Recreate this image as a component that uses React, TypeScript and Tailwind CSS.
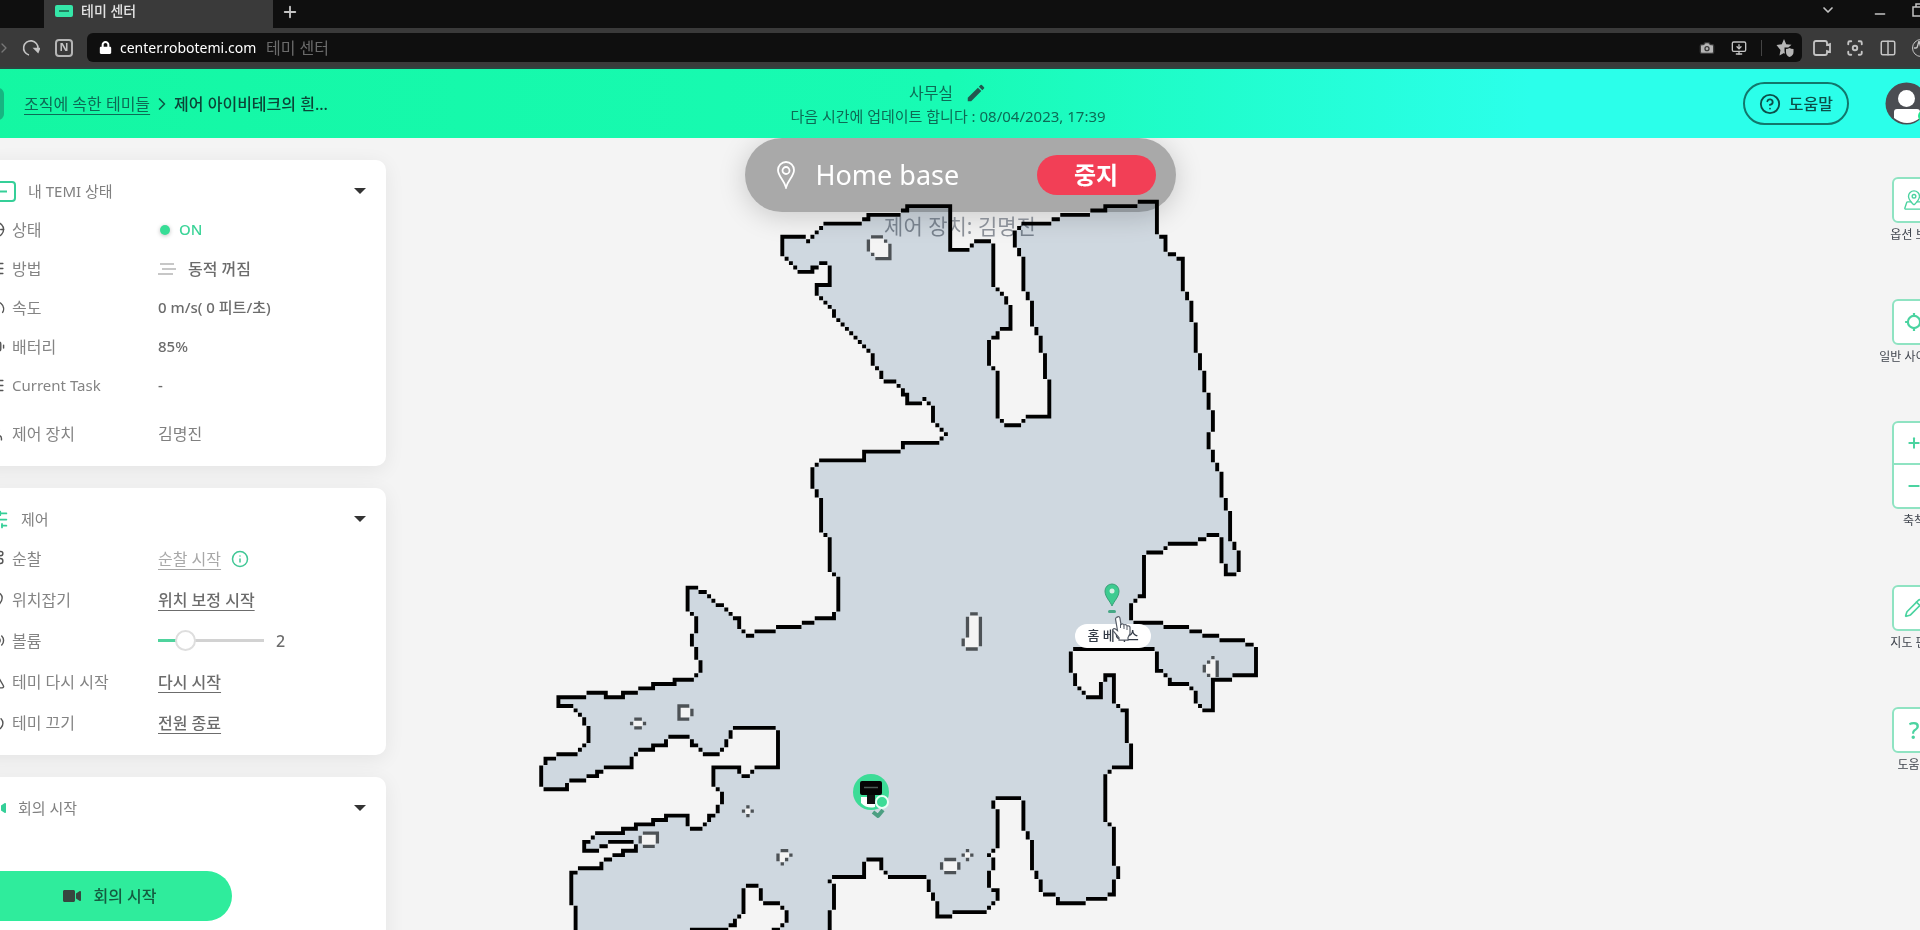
import React, { useMemo, useState } from "react";
import {
  Activity,
  Battery,
  Camera,
  ChevronDown,
  ChevronRight,
  CircleQuestionMark,
  Columns2,
  Crosshair,
  Focus,
  Gauge,
  Info,
  ListChecks,
  MapPin,
  MapPinned,
  Minus,
  MonitorDown,
  Pencil,
  Plus,
  Power,
  Route,
  SlidersHorizontal,
  TriangleAlert,
  User,
  Volume2,
} from "lucide-react";
import { FaLock, FaVideo } from "react-icons/fa";
import { MdEdit } from "react-icons/md";

const FONT = "font-['Noto_Sans','Noto_Sans_CJK_KR',sans-serif]";

// Size of one occupancy cell on the scanned floor map.
const CELL_W = 4.306;
const CELL_H = 4.385;
const ORIGIN_X = 782.3;
const ORIGIN_Y = 201.7;

const OUTER_WALL = `782,255 782,237 805,237 809,241 813,236 817,232 822,228 825,224 859,224 862,220 867,220 870,215
898,215 901,211 906,211 909,206 950,206 950,247 952,250 968,250 970,246 974,241 989,241 992,245 992,287 997,289
1001,293 1005,297 1005,303 1010,307 1010,329 1001,329 997,333 997,337 992,337 988,341 988,365 992,369 997,373
997,417 1001,421 1005,425 1020,425 1023,421 1027,416 1048,416 1050,412 1050,381 1046,378 1046,354 1041,351
1041,338 1037,334 1037,328 1032,325 1032,301 1028,298 1028,293 1023,290 1023,258 1019,255 1019,250 1015,246
1015,232 1019,228 1024,224 1050,224 1054,220 1059,220 1062,215 1090,215 1093,211 1104,211 1107,206 1135,206
1138,202 1155,202 1155,211 1159,215 1159,232 1164,236 1164,250 1168,254 1172,254 1177,258 1181,258 1181,290
1186,294 1186,298 1190,302 1190,320 1195,324 1195,351 1199,355 1199,368 1203,372 1203,391 1207,395 1207,408
1212,412 1212,430 1207,434 1207,448 1212,452 1212,460 1217,465 1217,469 1221,474 1221,495 1225,500 1225,509
1229,513 1229,540 1233,544 1233,549 1238,553 1238,571 1234,575 1225,575 1225,565 1221,561 1221,538 1217,535
1207,535 1203,539 1199,539 1195,544 1168,544 1164,548 1160,553 1150,553 1146,557 1142,561 1142,575 1146,579
1146,596 1141,596 1137,601 1133,605 1133,619 1137,622 1160,622 1164,627 1187,627 1190,631 1199,631 1203,636
1217,636 1221,640 1244,640 1248,644 1252,644 1256,648 1256,675 1233,675 1229,679 1212,679 1212,710 1203,710
1199,706 1195,702 1195,692 1190,689 1187,684 1168,684 1168,680 1164,675 1159,671 1155,668 1155,652 1152,648
1077,648 1072,652 1072,671 1076,674 1076,685 1081,689 1085,693 1089,697 1099,697 1103,693 1103,683 1107,680
1107,675 1115,675 1115,702 1120,706 1125,710 1125,741 1129,746 1133,750 1133,767 1115,767 1111,771 1107,775
1107,821 1111,824 1115,828 1115,865 1120,869 1120,878 1115,882 1115,894 1111,894 1107,899 1089,899 1085,903
1059,903 1059,899 1054,894 1045,894 1041,890 1041,881 1037,878 1037,872 1032,868 1032,842 1028,838 1028,832
1023,829 1023,802 1020,798 997,798 993,802 993,808 997,812 997,847 993,851 988,855 993,859 993,869 988,873
988,887 993,889 997,889 997,899 993,903 988,908 986,912 953,912 950,916 936,916 936,903 931,899 931,893
927,890 927,881 924,877 891,877 887,873 883,869 883,863 880,859 870,859 866,863 866,877 834,877 831,881
835,885 835,908 831,912 831,945 774,945 774,929 779,929 783,925 787,921 787,911 783,907 780,903 763,903
760,899 760,889 757,885 746,885 743,889 743,912 739,916 734,920 734,925 730,925 726,929 692,929 688,933
688,945 576,945 576,907 572,904 572,872 577,872 580,869 600,869 603,864 606,859 612,859 615,855 622,855
624,851 635,851 637,846 633,842 610,842 607,846 602,846 599,851 585,851 585,842 590,842 594,838 598,833
621,833 624,829 635,829 638,824 652,824 655,820 665,820 668,816 686,816 686,824 690,829 699,829 703,824
707,820 707,816 712,816 717,812 717,807 721,803 721,793 717,789 712,786 712,767 739,767 739,771 743,776
749,776 752,772 755,767 776,767 778,764 778,731 774,728 733,728 730,732 730,737 725,741 725,746 721,750
718,754 703,754 699,750 695,746 691,746 691,741 688,737 672,737 668,741 668,746 655,746 652,750 641,750
637,754 633,758 633,764 630,767 606,767 603,771 597,771 595,776 588,776 586,780 571,780 568,785 565,789
546,789 541,782 541,767 546,762 546,758 556,758 558,754 577,754 581,750 585,746 589,742 589,728 585,724
585,719 581,714 576,710 573,706 558,706 558,697 586,697 589,693 604,693 607,697 621,697 624,693 638,693
641,689 652,689 655,684 673,684 676,680 692,680 695,675 699,672 699,661 695,658 695,647 691,645 691,635
695,633 695,617 690,614 686,611 686,587 695,587 699,592 703,592 708,596 712,601 716,605 722,605 726,610
730,614 734,618 738,618 738,628 743,632 747,636 753,636 755,632 775,632 778,627 801,627 804,623 814,623
816,618 833,618 835,614 840,611 840,578 835,575 831,572 831,538 827,535 822,532 822,499 817,496 817,491
813,488 813,468 817,465 820,461 863,461 866,456 866,452 898,452 901,447 904,443 937,443 940,438 944,434
940,430 936,426 931,422 931,407 927,403 923,399 919,403 909,403 909,399 906,395 901,395 901,390 897,386
893,381 886,381 883,378 883,372 879,368 874,365 874,354 870,351 835,316 835,310 831,307 826,302 822,298
817,294 817,286 830,286 831,267 827,263 820,263 818,267 812,267 811,272 800,272 795,267 791,263 787,259`;

const OBSTACLES = [
  "873,237 880,237 884,241 888,246 892,250 892,255 888,259 879,259 874,255 870,251 870,241",
  "970,614 977,614 981,618 981,646 977,650 966,650 962,646 962,639 967,635 967,618",
  "677,710 677,716 681,719 687,719 691,716 691,710 687,706 681,706",
  "633,724 637,728 642,728 646,724 642,720 637,720",
  "641,838 644,833 656,833 659,838 656,842 652,846 645,846 641,842",
  "743,811 747,807 752,811 747,816",
  "778,854 778,860 782,864 787,859 791,855 788,850 782,850",
  "943,863 943,869 948,872 954,872 958,868 958,863 954,858 948,858",
  "962,855 966,850 970,855 966,859",
  "1212,658 1208,662 1203,666 1203,671 1208,675 1212,679 1216,675 1216,662",
];

type Cell = [number, number];

function toCells(points: string): Cell[] {
  return points.split(/\s+/).map((p) => {
    const [x, y] = p.split(",").map(Number);
    return [
      Math.round((x - ORIGIN_X) / CELL_W),
      Math.round((y - ORIGIN_Y) / CELL_H),
    ];
  });
}

/** Walks the closed outline cell by cell (Bresenham). */
function trace(corners: Cell[]): Cell[] {
  const out: Cell[] = [];
  corners.forEach(([x0, y0], i) => {
    const [x1, y1] = corners[(i + 1) % corners.length];
    const dx = Math.abs(x1 - x0);
    const dy = -Math.abs(y1 - y0);
    let x = x0;
    let y = y0;
    let err = dx + dy;
    while (x !== x1 || y !== y1) {
      out.push([x, y]);
      const e2 = 2 * err;
      if (e2 >= dy) {
        err += dy;
        x += Math.sign(x1 - x0);
      }
      if (e2 <= dx) {
        err += dx;
        y += Math.sign(y1 - y0);
      }
    }
  });
  return out;
}

const at = ([c, r]: Cell) =>
  `${(ORIGIN_X + c * CELL_W).toFixed(1)} ${(ORIGIN_Y + r * CELL_H).toFixed(1)}`;

function areaPath(cells: Cell[]) {
  return `M${cells.map(at).join("L")}Z`;
}

// Straight neighbours are joined, diagonal ones only touch at the corner.
function wallPath(cells: Cell[]) {
  return cells
    .map((cell, i) => {
      const next = cells[(i + 1) % cells.length];
      const straight = cell[0] === next[0] || cell[1] === next[1];
      return `M${at(cell)}L${at(straight ? next : cell)}`;
    })
    .join("");
}

const MAP_SVG = "pointer-events-none absolute inset-0 h-full w-full";
const MAP_VIEW = "0 138 1920 792";

function FloorMap() {
  const map = useMemo(() => {
    const outer = trace(toCells(OUTER_WALL));
    const holes = OBSTACLES.map((o) => trace(toCells(o)));
    return {
      area: [outer, ...holes].map(areaPath).join(""),
      walls: wallPath(outer),
      holes: holes.map(wallPath).join(""),
    };
  }, []);

  return (
    <svg
      className={`${MAP_SVG} mix-blend-multiply`}
      viewBox={MAP_VIEW}
      preserveAspectRatio="xMidYMin slice"
      aria-hidden
    >
      <path d={map.area} fill="#d9e2ea" fillRule="evenodd" />
      <g fill="none" strokeLinecap="square">
        <path d={map.holes} stroke="#50555a" strokeWidth="3.300" />
        <path d={map.walls} stroke="#000" strokeWidth="3.900" />
      </g>
    </svg>
  );
}

function MapMarkers() {
  return (
    <svg
      className={MAP_SVG}
      viewBox={MAP_VIEW}
      preserveAspectRatio="xMidYMin slice"
    >
      {/* robot */}
      <circle cx="871" cy="792" r="18" fill="#3ddc97" />
      <path d="M861 797h14v10q-8 2-14-4z" fill="#fff" />
      <rect x="860" y="781" width="22" height="14" rx="2" fill="#050505" />
      <path d="M864 787.500h14" stroke="#4d5a55" strokeWidth="1.500" />
      <path d="M867 795h8v9h-8z" fill="#111" />
      <path
        d="M873 812l5 4 5-6"
        fill="none"
        stroke="#4c9f82"
        strokeWidth="4"
        strokeLinejoin="round"
      />
      <circle
        cx="882"
        cy="802"
        r="6"
        fill="#3ddc97"
        stroke="#eafff6"
        strokeWidth="2"
      />
      {/* home base */}
      <path
        d="M1112 606c-2-5-7-9-7-15a7 7 0 0 1 14 0c0 6-5 10-7 15z"
        fill="#3ecb90"
        stroke="#3a9f78"
      />
      <circle cx="1112" cy="591" r="2.500" fill="#d5efe4" />
      <rect x="1108" y="610" width="8" height="3" rx="1.500" fill="#46a885" />
      <rect x="1075" y="624" width="76" height="24" rx="12" fill="#fff" />
      <text
        x="1113"
        y="640"
        textAnchor="middle"
        className="fill-[#333b47] text-[13px] font-medium"
      >
        홈 베이스
      </text>
      <path
        d="M1117 617c1.500-1 3 0 3 1.500l1 6c1-1 3-.5 3 .7 1-1 3-.4 3 .9 1.500-.7 3 0 3 1.500v6l-2 4v2.500h-9v-2.500l-6-7c-.5-1.500 1-2.600 2.500-1.600l2 1.500-2-11.500c0-.8.600-1.500 1.500-1.500z"
        fill="#fff"
        stroke="#555b66"
        strokeWidth="1.200"
      />
      <path
        d="M1120.500 624v4M1124 626v3M1127 627v3"
        stroke="#555b66"
        strokeWidth="1"
      />
    </svg>
  );
}

function TemiIcon() {
  return (
    <svg className="h-[12px] w-[18px]" viewBox="0 0 18 12">
      <rect width="18" height="12" rx="2" fill="#35e6a8" />
      <path d="M4 6h10" stroke="#1b5c47" strokeWidth="1.500" />
    </svg>
  );
}

function BrowserChrome() {
  return (
    <div className="bg-[#3a3a3a] text-[#c4c4c4]">
      <div className="flex h-7 items-center bg-[#0f0f0f]">
        <div className="ml-11 flex h-full w-[229px] items-center gap-2 bg-[#3a3a3a] pb-[6px] pl-[11px] text-sm font-medium text-[#e2e2e2]">
          <TemiIcon />
          테미 센터
        </div>
        <button aria-label="New tab" className="ml-2 pb-1">
          <Plus className="size-[18px]" strokeWidth={2.5} />
        </button>
        <div className="-mr-2 ml-auto flex items-center pb-2">
          <button aria-label="Search tabs" className="mr-9">
            <ChevronDown className="size-4" strokeWidth={2.5} />
          </button>
          <button aria-label="Minimize" className="mr-6 pt-2">
            <Minus className="size-4" />
          </button>
          <button aria-label="Restore">
            <svg
              className="size-4"
              viewBox="0 0 16 16"
              fill="none"
              stroke="currentColor"
              strokeWidth="1.500"
            >
              <path d="M1 5h9v9H1zM4 5V2h9v9h-3" />
            </svg>
          </button>
        </div>
      </div>
      <div className="-mr-[10px] flex h-[41px] items-center border-b-2 border-[#2c4540]">
        <button aria-label="Forward" className="-ml-1 text-[#777]">
          <ChevronRight className="size-4" />
        </button>
        <button aria-label="Reload" className="ml-[10px]">
          <svg
            className="size-[18px]"
            viewBox="0 0 18 18"
            fill="none"
            stroke="currentColor"
            strokeWidth="1.600"
          >
            <path d="M7 16A7.200 7.200 0 1 1 16 9.500" />
            <path d="M12.500 9.500h5l-1.500 3.500z" fill="currentColor" />
          </svg>
        </button>
        <button
          aria-label="Naver"
          className="ml-[15px] flex size-[18px] items-center justify-center rounded border-2 border-[#b5b5b5] text-[11px] font-bold"
        >
          N
        </button>
        <div className="ml-[14px] flex h-[29px] flex-1 items-center rounded-md bg-[#0f0f0f] pl-3 pr-2">
          <FaLock className="size-[13px] text-white" />
          <label htmlFor="url" className="sr-only">
            Address
          </label>
          <input
            id="url"
            readOnly
            value="center.robotemi.com"
            className="ml-2 w-[146px] bg-transparent text-sm text-white outline-none"
          />
          <span className="text-base text-[#6b6b6b]">테미 센터</span>
          <div className="ml-auto flex items-center">
            <Camera
              className="size-4 fill-[#b5b5b5] text-[#3a3a3a]"
              strokeWidth={2}
            />
            <MonitorDown className="ml-4 size-4" />
            <span className="mx-[14px] h-4 w-px bg-[#444]" />
            <svg className="size-[18px]" viewBox="0 0 18 18" fill="#b5b5b5">
              <path d="M8 0l2.200 5.200 5.300.5-3.200 2.800H8.500v3.500L9 15l-1-1-4.500 2.500 1-5.500L.5 6l5.300-.8z" />
              <path d="M10 10q2 0 3.500-1 1.500 1 4 1v3q0 3.500-4 5-3.500-1.500-3.500-5z" />
            </svg>
          </div>
        </div>
        <div className="ml-[11px] flex items-center gap-[15px]">
          <svg
            className="size-[18px]"
            viewBox="0 0 18 18"
            fill="none"
            stroke="currentColor"
            strokeWidth="1.800"
          >
            <path d="M3 2h9q2 0 2 2v2l3-1v8l-3-1v2q0 2-2 2H3q-2 0-2-2V4q0-2 2-2z" />
          </svg>
          <Focus className="size-[18px]" strokeWidth={2.5} />
          <Columns2 className="size-[18px]" />
          <Activity className="size-[18px] rounded-full border border-current" />
        </div>
      </div>
    </div>
  );
}

function PageHeader() {
  return (
    <header className="-ml-6 grid h-[69px] grid-cols-[1fr_auto_1fr] items-center bg-linear-to-r from-[#14f7a2] via-[#18fbb4] to-[#2bffea] to-80% text-[#0d6b55]">
      <nav className="flex items-center text-base">
        <span className="mr-5 h-8 w-7 rounded-md bg-[#17b581]" />
        <a href="#temis" className="underline underline-offset-4">
          조직에 속한 테미들
        </a>
        <ChevronRight className="mx-[2px] size-5 text-[#0d5846]" />
        <span className="font-medium text-[#0c4437]">
          제어 아이비테크의 흰...
        </span>
      </nav>
      <div className="text-center text-[15px]">
        <div className="flex items-center justify-center gap-3 text-base leading-6">
          <span>사무실</span>
          <button aria-label="Edit" className="text-[#23584f]">
            <MdEdit className="size-[22px]" />
          </button>
        </div>
        <p className="leading-[22px]">
          다음 시간에 업데이트 합니다 : 08/04/2023, 17:39
        </p>
      </div>
      <div className="-mr-2 flex items-center justify-end gap-9">
        <button className="flex h-[43px] items-center gap-2 rounded-full border-2 border-[#12776c] px-[14px] text-base font-medium text-[#0d4f4a]">
          <CircleQuestionMark className="size-[22px]" />
          도움말
        </button>
        <svg className="size-[43px]" viewBox="0 0 43 43">
          <circle cx="21.500" cy="21.500" r="21" fill="#4b4d52" />
          <path d="M9 36V30q0-3 3-3h20q3 0 3 3v6q-13 10-26 0z" fill="#fff" />
          <circle cx="21.500" cy="16.500" r="8.500" fill="#fff" />
          <circle cx="39" cy="34" r="6" fill="#22e58f" />
        </svg>
      </div>
    </header>
  );
}

function Card({
  icon,
  title,
  children,
}: {
  icon: React.ReactNode;
  title: string;
  children: React.ReactNode;
}) {
  return (
    <section className="rounded-[10px] bg-white pb-1 pl-3 pr-5 pt-3 shadow-[0_4px_20px_rgba(0,0,0,0.07)]">
      <button className="flex h-[38px] w-full items-center gap-3 text-[15px] text-[#808080]">
        <span className="text-[#35cf98]">{icon}</span>
        {title}
        <span className="ml-auto border-x-[6px] border-t-[6px] border-x-transparent border-t-[#333]" />
      </button>
      {children}
    </section>
  );
}

function Row({
  icon,
  label,
  compact = false,
  children,
}: {
  icon: React.ReactNode;
  label: string;
  /** Smaller type for rows that are mostly Latin text and digits. */
  compact?: boolean;
  children: React.ReactNode;
}) {
  const size = compact ? "text-[15px]" : "text-base";

  return (
    <div className={`grid grid-cols-[170px_1fr] items-center ${size}`}>
      <dt className="flex items-center gap-[7px] text-[#848484]">
        <span className="text-[#555]">{icon}</span>
        {label}
      </dt>
      <dd className="flex items-center font-medium text-[#6c6c6c]">
        {children}
      </dd>
    </div>
  );
}

const rowIcon = "size-[17px]";

function StatusCard() {
  return (
    <Card
      title="내 TEMI 상태"
      icon={
        <svg
          className="h-[21px] w-7"
          viewBox="0 0 28 21"
          fill="none"
          stroke="currentColor"
          strokeWidth="2"
        >
          <rect x="1" y="1" width="26" height="19" rx="3" />
          <path d="M9 10.500h10" />
        </svg>
      }
    >
      <dl className="grid grid-rows-[repeat(5,39px)_57px]">
        <Row icon={<Crosshair className={rowIcon} />} label="상태">
          <span className="ml-[2px] mr-[9px] size-[10px] rounded-full bg-[#37dd96] shadow-[0_1px_4px_rgba(0,0,0,0.25)]" />
          <span className="text-[15px] text-[#3cd498]">ON</span>
        </Row>
        <Row icon={<SlidersHorizontal className={rowIcon} />} label="방법">
          <svg
            className="mr-3 h-3 w-[18px]"
            viewBox="0 0 18 12"
            stroke="#909090"
            strokeWidth="1.200"
          >
            <path d="M2 1h14M4 6h14M0 11h15" />
          </svg>
          동적 꺼짐
        </Row>
        <Row icon={<Gauge className={rowIcon} />} label="속도">
          <span className="text-[15px]">0 m/s( 0 피트/초)</span>
        </Row>
        <Row icon={<Battery className={rowIcon} />} label="배터리">
          <span className="text-[15px]">85%</span>
        </Row>
        <Row
          icon={<ListChecks className={rowIcon} />}
          label="Current Task"
          compact
        >
          -
        </Row>
        <Row icon={<User className={rowIcon} />} label="제어 장치">
          <span className="font-normal text-[#808080]">김명진</span>
        </Row>
      </dl>
    </Card>
  );
}

const linkClass = "underline underline-offset-4";

function ControlCard() {
  const [volume, setVolume] = useState(2);

  return (
    <Card
      title="제어"
      icon={<SlidersHorizontal className="h-[21px] w-[21px]" />}
    >
      <dl className="grid auto-rows-[41px] pb-2">
        <Row icon={<Route className={rowIcon} />} label="순찰">
          <button className={`${linkClass} font-normal text-[#a8a8a8]`}>
            순찰 시작
          </button>
          <Info className="ml-[10px] size-[18px] text-[#3fc795]" />
        </Row>
        <Row icon={<MapPin className={rowIcon} />} label="위치잡기">
          <button className={linkClass}>위치 보정 시작</button>
        </Row>
        <Row icon={<Volume2 className={rowIcon} />} label="볼륨">
          <input
            type="range"
            aria-label="볼륨"
            min={0}
            max={10}
            value={volume}
            onChange={(e) => setVolume(Number(e.target.value))}
            className="h-[3px] w-[106px] appearance-none bg-linear-to-r from-[#4fd39d] from-25% to-[#d2d2d2] to-25% [&::-webkit-slider-thumb]:size-[21px] [&::-webkit-slider-thumb]:appearance-none [&::-webkit-slider-thumb]:rounded-full [&::-webkit-slider-thumb]:border-2 [&::-webkit-slider-thumb]:border-[#dedede] [&::-webkit-slider-thumb]:bg-white"
          />
          <span className="ml-3">{volume}</span>
        </Row>
        <Row icon={<TriangleAlert className={rowIcon} />} label="테미 다시 시작">
          <button className={linkClass}>다시 시작</button>
        </Row>
        <Row icon={<Power className={rowIcon} />} label="테미 끄기">
          <button className={linkClass}>전원 종료</button>
        </Row>
      </dl>
    </Card>
  );
}

function MeetingCard() {
  return (
    <Card title="회의 시작" icon={<FaVideo className="size-[18px]" />}>
      <button className="-ml-3 mb-10 mt-11 flex h-[50px] w-64 items-center justify-center gap-3 rounded-full bg-[#2fec9c] pl-3 text-base font-medium text-[#145c40]">
        <FaVideo className="size-[18px] text-[#37463f]" />
        회의 시작
      </button>
    </Card>
  );
}

function RouteStatus() {
  return (
    <div className="absolute inset-x-0 top-0 flex flex-col items-center">
      <div className="flex h-[74px] w-[431px] items-center rounded-full bg-[#a9a9a9] pl-8 pr-5 text-white shadow-[0_4px_28px_rgba(0,0,0,0.18)]">
        <svg
          className="h-[28px] w-[18px]"
          viewBox="0 0 18 28"
          fill="none"
          stroke="currentColor"
          strokeWidth="1.800"
        >
          <path d="M9 26.500C7 19 1 15 1 9a8 8 0 0 1 16 0c0 6-6 10-8 17.500z" />
          <circle cx="9" cy="9.500" r="3.500" />
        </svg>
        <span className="ml-[21px] text-[27px]">Home base</span>
        <button className="ml-auto h-10 w-[119px] rounded-full bg-[#f23f56] text-2xl font-bold">
          중지
        </button>
      </div>
      <p className="-mt-1 text-[21px] leading-9 text-[#8b9098]">
        제어 장치: 김명진
      </p>
    </div>
  );
}

function Tool({ label, children }: { label: string; children: React.ReactNode }) {
  return (
    <div className="flex flex-col items-center">
      <div className="w-11 divide-y-2 divide-[#8fe3c2] overflow-hidden rounded-md border-2 border-[#8fe3c2] bg-white text-[#4bd3a0]">
        {children}
      </div>
      <span className="whitespace-nowrap text-xs leading-6 text-[#3f444d]">
        {label}
      </span>
    </div>
  );
}

const toolButton = "flex h-[42px] w-full items-center justify-center";

function MapTools() {
  return (
    <nav className="-mr-[34px] flex w-20 flex-col gap-[52px] pt-[39px]">
      <Tool label="옵션 보기">
        <button aria-label="옵션 보기" className={toolButton}>
          <MapPinned className="size-[22px]" strokeWidth={1.5} />
        </button>
      </Tool>
      <Tool label="일반 사이즈로">
        <button aria-label="일반 사이즈로" className={toolButton}>
          <svg
            className="size-[20px]"
            viewBox="0 0 18 18"
            fill="none"
            stroke="currentColor"
            strokeWidth="2"
          >
            <circle cx="9" cy="9" r="5.500" />
            <path d="M9 1v3M9 14v3M1 9h3M14 9h3" />
          </svg>
        </button>
      </Tool>
      <Tool label="축척">
        <button aria-label="확대" className={toolButton}>
          <Plus className="size-4" strokeWidth={3} />
        </button>
        <button aria-label="축소" className={toolButton}>
          <Minus className="size-4" strokeWidth={3} />
        </button>
      </Tool>
      <Tool label="지도 편집">
        <button aria-label="지도 편집" className={toolButton}>
          <Pencil className="size-5" />
        </button>
      </Tool>
      <Tool label="도움말">
        <button
          aria-label="도움말"
          className={`${toolButton} text-2xl font-medium`}
        >
          ?
        </button>
      </Tool>
    </nav>
  );
}

export default function App() {
  return (
    <div className={`flex h-screen flex-col overflow-hidden ${FONT}`}>
      <BrowserChrome />
      <PageHeader />
      <main className="relative flex min-h-0 flex-1 justify-between overflow-hidden bg-[#f4f4f4]">
        <RouteStatus />
        <FloorMap />
        <MapMarkers />
        <aside className="relative -ml-6 flex w-[410px] flex-col gap-[22px] pt-[22px]">
          <StatusCard />
          <ControlCard />
          <MeetingCard />
        </aside>
        <div className="relative">
          <MapTools />
        </div>
      </main>
    </div>
  );
}
